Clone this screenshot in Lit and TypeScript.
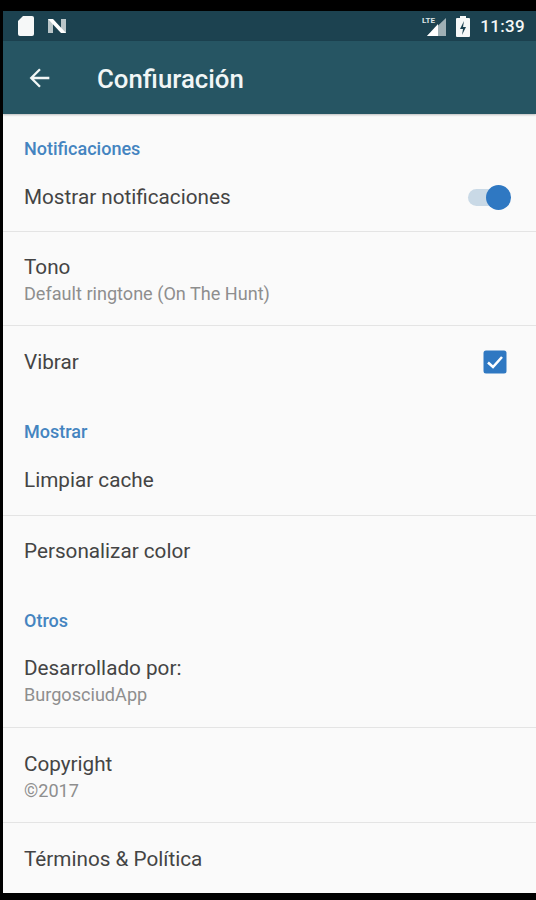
import { LitElement, html, css } from 'lit';
import { customElement } from 'lit/decorators.js';

@customElement('app-root')
export class AppRoot extends LitElement {
  static styles = css`
    :host {
      display: block;
      width: 536px;
      height: 900px;
      background: #000;
      font-family: Roboto, "Noto Sans", sans-serif;
      overflow: hidden;
    }
    .screen {
      margin: 11px 0 0 3px;
      height: 882px;
      display: flex;
      flex-direction: column;
      background: #fafafa;
      overflow: hidden;
    }
    .status {
      height: 30px;
      flex: none;
      background: #1c4250;
      display: flex;
      align-items: center;
      color: #f4f8f8;
      padding: 0 11px 0 14px;
    }
    .status-left {
      display: flex;
      align-items: center;
      gap: 12px;
      flex: 1;
    }
    .status-right {
      display: flex;
      align-items: center;
      gap: 10px;
    }
    .lte {
      font-size: 8px;
      font-weight: 700;
      font-family: Roboto, sans-serif;
      fill: #dfe6e8;
    }
    .clock {
      font-size: 17px;
      font-weight: 500;
      letter-spacing: 0.3px;
    }
    .toolbar {
      height: 73px;
      flex: none;
      background: #265563;
      display: flex;
      align-items: center;
      gap: 43px;
      padding-left: 23px;
      box-sizing: border-box;
      box-shadow: 0 1px 2px rgba(0, 0, 0, 0.25);
      color: #f1f6f6;
    }
    .toolbar h1 {
      margin: 2px 0 0;
      font-size: 25.8px;
      font-weight: 500;
    }
    .section {
      color: #4484c0;
      font-size: 18px;
      font-weight: 500;
      padding-left: 21px;
      height: 20px;
      line-height: 20px;
      flex: none;
    }
    .row {
      display: flex;
      align-items: center;
      justify-content: space-between;
      padding-right: 29px;
      padding-left: 21px;
      flex: none;
      box-sizing: border-box;
      color: #444;
      font-size: 20.7px;
    }
    .line {
      border-bottom: 1px solid #e4e4e4;
    }
    .sub {
      color: #8e8e8e;
      font-size: 18.1px;
      margin-top: 7px;
    }
    .title,
    .sub {
      line-height: 20px;
    }
    .switch {
      position: relative;
      width: 40px;
      height: 17px;
      margin-right: -1px;
      border-radius: 9px;
      background: #c9d9e6;
    }
    .switch::after {
      content: '';
      position: absolute;
      right: -3px;
      top: -4px;
      width: 25px;
      height: 25px;
      border-radius: 50%;
      background: #2f78c2;
    }
    svg {
      display: block;
    }
  `;

  private row(title: string, sub: string, height: number, pad: number, line: boolean, end: unknown = '') {
    return html`
      <div class="row ${line ? 'line' : ''}" style="height:${height}px;padding-top:${pad}px">
        <div>
          <div class="title">${title}</div>
          ${sub ? html`<div class="sub">${sub}</div>` : ''}
        </div>
        ${end}
      </div>
    `;
  }

  render() {
    const check = html`<svg width="24" height="24" viewBox="0 0 24 24">
      <rect x="0.5" y="0.5" width="23" height="23" rx="2.5" fill="#2f78c2"></rect>
      <path d="M5 12.5l5 4.5 9-10" fill="none" stroke="#fff" stroke-width="2.6"></path>
    </svg>`;
    return html`
      <div class="screen">
        <div class="status">
          <div class="status-left">
            <svg width="18" height="24" viewBox="0 0 18 24">
              <path d="M6 2h9a2 2 0 0 1 2 2v16a2 2 0 0 1-2 2H3a2 2 0 0 1-2-2V7z" fill="#f6f8f8"></path>
            </svg>
            <svg width="20" height="16" viewBox="0 0 20 16">
              <path d="M1 1h5v14H1zM14 1h5v14h-5z" fill="#b9c5c8"></path>
              <path d="M1 1h5l13 14h-5z" fill="#fff"></path>
            </svg>
          </div>
          <div class="status-right">
            <svg width="24" height="24" viewBox="0 0 24 24">
              <path d="M24 4v18H5z" fill="#9fb0b5"></path>
              <path d="M16 10v12H5z" fill="#fff"></path>
              <text class="lte" x="0" y="9">LTE</text>
            </svg>
            <svg width="14" height="24" viewBox="0 0 14 24">
              <path d="M4 2h6v2h3a1 1 0 0 1 1 1v17a1 1 0 0 1-1 1H1a1 1 0 0 1-1-1V5a1 1 0 0 1 1-1h3z" fill="#f6f8f8"></path>
              <path d="M8 7l-4 8h3l-1 6 4-8H7z" fill="#1c4250"></path>
            </svg>
            <span class="clock">11:39</span>
          </div>
        </div>
        <div class="toolbar">
          <svg width="28" height="28" viewBox="0 0 24 24">
            <path d="M20 12H5M12 4.5L4.5 12l7.5 7.5" fill="none" stroke="currentColor" stroke-width="2"></path>
          </svg>
          <h1>Confiuración</h1>
        </div>
        <div class="section" style="margin-top:25px">Notificaciones</div>
        ${this.row('Mostrar notificaciones', '', 73, 4, true, html`<div class="switch"></div>`)}
        ${this.row('Tono', 'Default ringtone (On The Hunt)', 94, 4, true)}
        ${this.row('Vibrar', '', 72, 0, false, check)}
        <div class="section" style="margin-top:24px">Mostrar</div>
        ${this.row('Limpiar cache', '', 74, 3, true)}
        ${this.row('Personalizar color', '', 70, 0, false)}
        <div class="section" style="margin-top:25px">Otros</div>
        ${this.row('Desarrollado por:', 'BurgosciudApp', 97, 5, true)}
        ${this.row('Copyright', '©2017', 95, 4, true)}
        ${this.row('Términos & Política', '', 71, 0, false)}
      </div>
    `;
  }
}
